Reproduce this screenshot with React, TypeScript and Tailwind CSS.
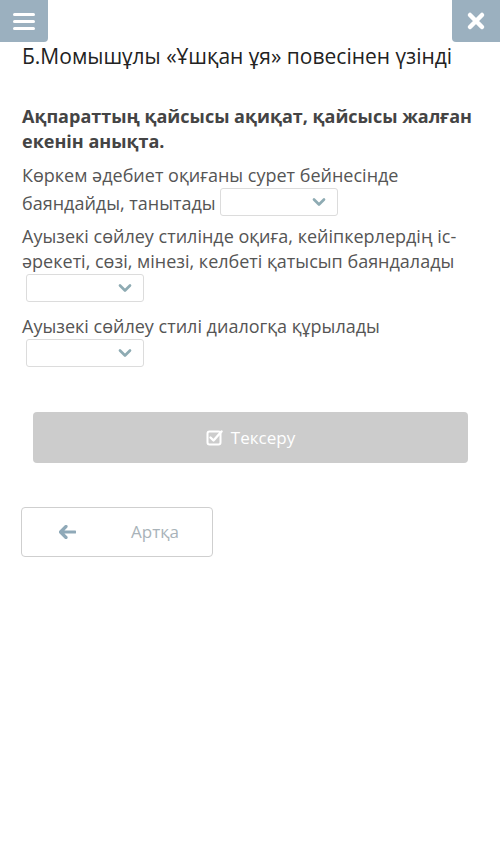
import { ChevronDown } from "lucide-react";

function Dropdown({ className = "" }: { className?: string }) {
  return (
    <span
      className={`inline-flex h-[28px] w-[118px] items-center justify-end rounded-[3px] border border-[#dcdcdc] bg-white pr-[8px] align-bottom ${className}`}
    >
      <ChevronDown className="h-[20px] w-[20px] text-[#8eabb3]" strokeWidth={3.2} />
    </span>
  );
}

export default function App() {
  return (
    <div className="min-h-screen bg-white font-['Open_Sans',sans-serif] text-[#555]">
      <header className="flex justify-between">
        <button className="flex h-[42px] w-[48px] flex-col items-center justify-center gap-[4px] rounded-br-[4px] bg-[#9bb0bf]">
          <span className="h-[3px] w-[22px] rounded bg-white" />
          <span className="h-[3px] w-[22px] rounded bg-white" />
          <span className="h-[3px] w-[22px] rounded bg-white" />
        </button>
        <button className="flex h-[42px] w-[48px] items-center justify-center rounded-bl-[4px] bg-[#9bb0bf]">
          <svg width="20" height="20" viewBox="0 0 20 20">
            <path d="M4 4 L16 16 M16 4 L4 16" stroke="white" strokeWidth="4.5" strokeLinecap="round" />
          </svg>
        </button>
      </header>

      <div className="px-[22px]">
        <h1 className="text-[21px] leading-[28px] text-[#222]">
          Б.Момышұлы «Ұшқан ұя» повесінен үзінді
        </h1>

        <p className="mt-[34px] text-[18px] font-bold leading-[25px] text-[#444]">
          Ақпараттың қайсысы ақиқат, қайсысы жалған екенін анықта.
        </p>

        <p className="mt-[9px] text-[18px] leading-[25px]">
          Көркем әдебиет оқиғаны сурет бейнесінде баяндайды, танытады <Dropdown />
        </p>

        <p className="mt-[8px] text-[18px] leading-[25px]">
          Ауызекі сөйлеу стилінде оқиға, кейіпкерлердің іс-әрекеті, сөзі, мінезі, келбеті қатысып баяндалады <Dropdown className="ml-[4px]" />
        </p>

        <p className="mt-[12px] text-[18px] leading-[25px]">
          Ауызекі сөйлеу стилі диалогқа құрылады <Dropdown className="ml-[4px]" />
        </p>
      </div>

      <div className="mt-[45px] pl-[33px] pr-[32px]">
        <button className="flex h-[51px] w-full items-center justify-center gap-[8px] rounded-[4px] bg-[#cccccc] text-[17px] text-white">
          <svg width="17" height="17" viewBox="0 0 17 17" fill="none">
            <rect x="1.5" y="2.5" width="13" height="13" rx="2" stroke="white" strokeWidth="2" />
            <path d="M4.5 8.5 L7.5 11.5 L15.5 2.5" stroke="white" strokeWidth="2.4" strokeLinecap="round" strokeLinejoin="round" />
          </svg>
          Тексеру
        </button>
      </div>

      <div className="mt-[44px] px-[21px]">
        <button className="flex h-[50px] w-[192px] items-center rounded-[4px] border border-[#cfcfcf] bg-white text-[17px] text-[#a9b3b9]">
          <svg className="ml-[37px]" width="17" height="14" viewBox="0 0 17 14">
            <path d="M7 1.5 L1.5 7 L7 12.5 M2 7 H16" stroke="#8fa9b8" strokeWidth="3.2" fill="none" strokeLinecap="round" strokeLinejoin="round" />
          </svg>
          <span className="ml-[55px]">Артқа</span>
        </button>
      </div>
    </div>
  );
}
